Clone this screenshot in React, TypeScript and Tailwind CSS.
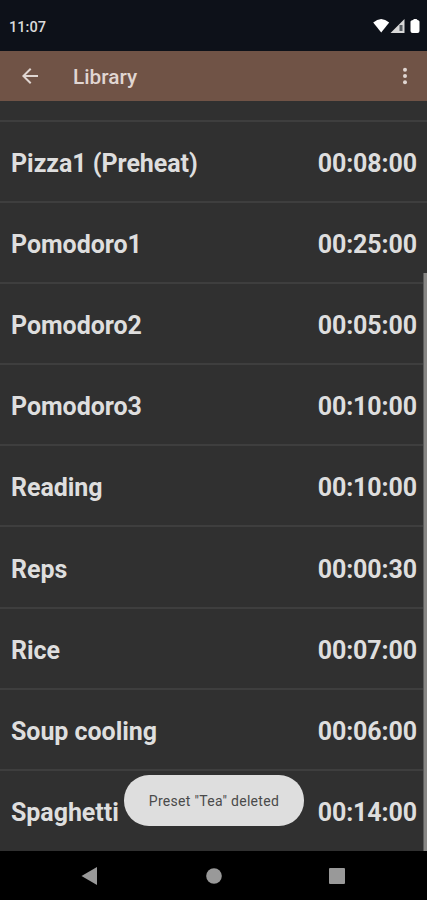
const presets = [
  { name: "Pizza1 (Preheat)", time: "00:08:00" },
  { name: "Pomodoro1", time: "00:25:00" },
  { name: "Pomodoro2", time: "00:05:00" },
  { name: "Pomodoro3", time: "00:10:00" },
  { name: "Reading", time: "00:10:00" },
  { name: "Reps", time: "00:00:30" },
  { name: "Rice", time: "00:07:00" },
  { name: "Soup cooling", time: "00:06:00" },
  { name: "Spaghetti", time: "00:14:00" },
];

export default function App() {
  return (
    <div className="relative flex h-[900px] w-[427px] flex-col overflow-hidden bg-[#303030] font-[Roboto,sans-serif]">
      <StatusBar />
      <Toolbar />
      <main className="flex-1 pt-[19px]">
        {presets.map((preset) => (
          <PresetRow key={preset.name} name={preset.name} time={preset.time} />
        ))}
      </main>
      <NavigationBar />
      <div className="absolute top-[273px] right-0 h-[578px] w-[4px] border-l border-[#5c5c5c] bg-[#868583]" />
      <Toast message={'Preset "Tea" deleted'} />
    </div>
  );
}

function StatusBar() {
  return (
    <div className="flex h-[51px] shrink-0 items-center justify-between bg-[#0d1119] pr-[5px] pl-[9px] text-[#dadada]">
      <span className="pt-[4px] text-[14.6px] font-medium">11:07</span>
      <svg width="50" height="18" viewBox="0 0 50 18" className="text-white" fill="currentColor">
        <path d="M1.2 5.5Q9.2 -1.5 17.2 5.5L9.2 15.5Z" />
        <path d="M18.5 16L32.5 2V16Z" fill="#d8d8d8" />
        <path d="M27.5 8h3v6h-3Z" fill="#555b60" />
        <path d="M38.5 4.5Q39 3.3 41 3L42 2h2.5L45.5 3Q47 3.3 47.5 4.5V14Q47.5 16 45.5 16h-5Q38.5 16 38.5 14Z" />
      </svg>
    </div>
  );
}

function Toolbar() {
  return (
    <header className="flex h-[50px] shrink-0 items-center bg-[#705346] pr-[10px] pl-[18px] text-[#e0d6d2]">
      <svg width="24" height="24" viewBox="0 0 24 24" fill="currentColor">
        <path d="M20 11H7.83l5.59-5.59L12 4l-8 8 8 8 1.41-1.41L7.83 13H20v-2z" />
      </svg>
      <h1 className="ml-[31px] flex-1 pt-[3px] text-[20.8px] font-medium">Library</h1>
      <svg width="24" height="24" viewBox="0 0 24 24" fill="currentColor">
        <circle cx="12" cy="5.7" r="2" />
        <circle cx="12" cy="12" r="2" />
        <circle cx="12" cy="18.3" r="2" />
      </svg>
    </header>
  );
}

function PresetRow({ name, time }: { name: string; time: string }) {
  return (
    <div className="flex h-[81.1px] items-center justify-between border-t-2 border-[#3e3e3e] pt-[4.6px] pr-[10px] pl-[11px] text-[25px] font-bold text-[#dedede]">
      <span className="tracking-[-0.05px]">{name}</span>
      <span className="tracking-[-0.1px]">{time}</span>
    </div>
  );
}

function NavigationBar() {
  return (
    <nav className="flex h-[49px] shrink-0 items-center justify-between bg-black pr-[82px] pl-[81px] text-[#999999]">
      <svg width="17" height="18" viewBox="0 0 17 18" fill="currentColor">
        <path d="M0.5 9L16 0V18Z" />
      </svg>
      <svg width="16" height="16" viewBox="0 0 16 16" fill="currentColor">
        <circle cx="8" cy="8" r="7.8" />
      </svg>
      <svg width="16" height="16" viewBox="0 0 16 16" fill="currentColor">
        <rect width="16" height="16" rx="1" />
      </svg>
    </nav>
  );
}

function Toast({ message }: { message: string }) {
  return (
    <div className="absolute top-[775px] left-[124px] flex h-[51px] w-[180px] items-center justify-center rounded-[25px] bg-[#dedede] pt-[2px] text-[14px] tracking-[0.3px] text-[#4a4a4a]">
      {message}
    </div>
  );
}
